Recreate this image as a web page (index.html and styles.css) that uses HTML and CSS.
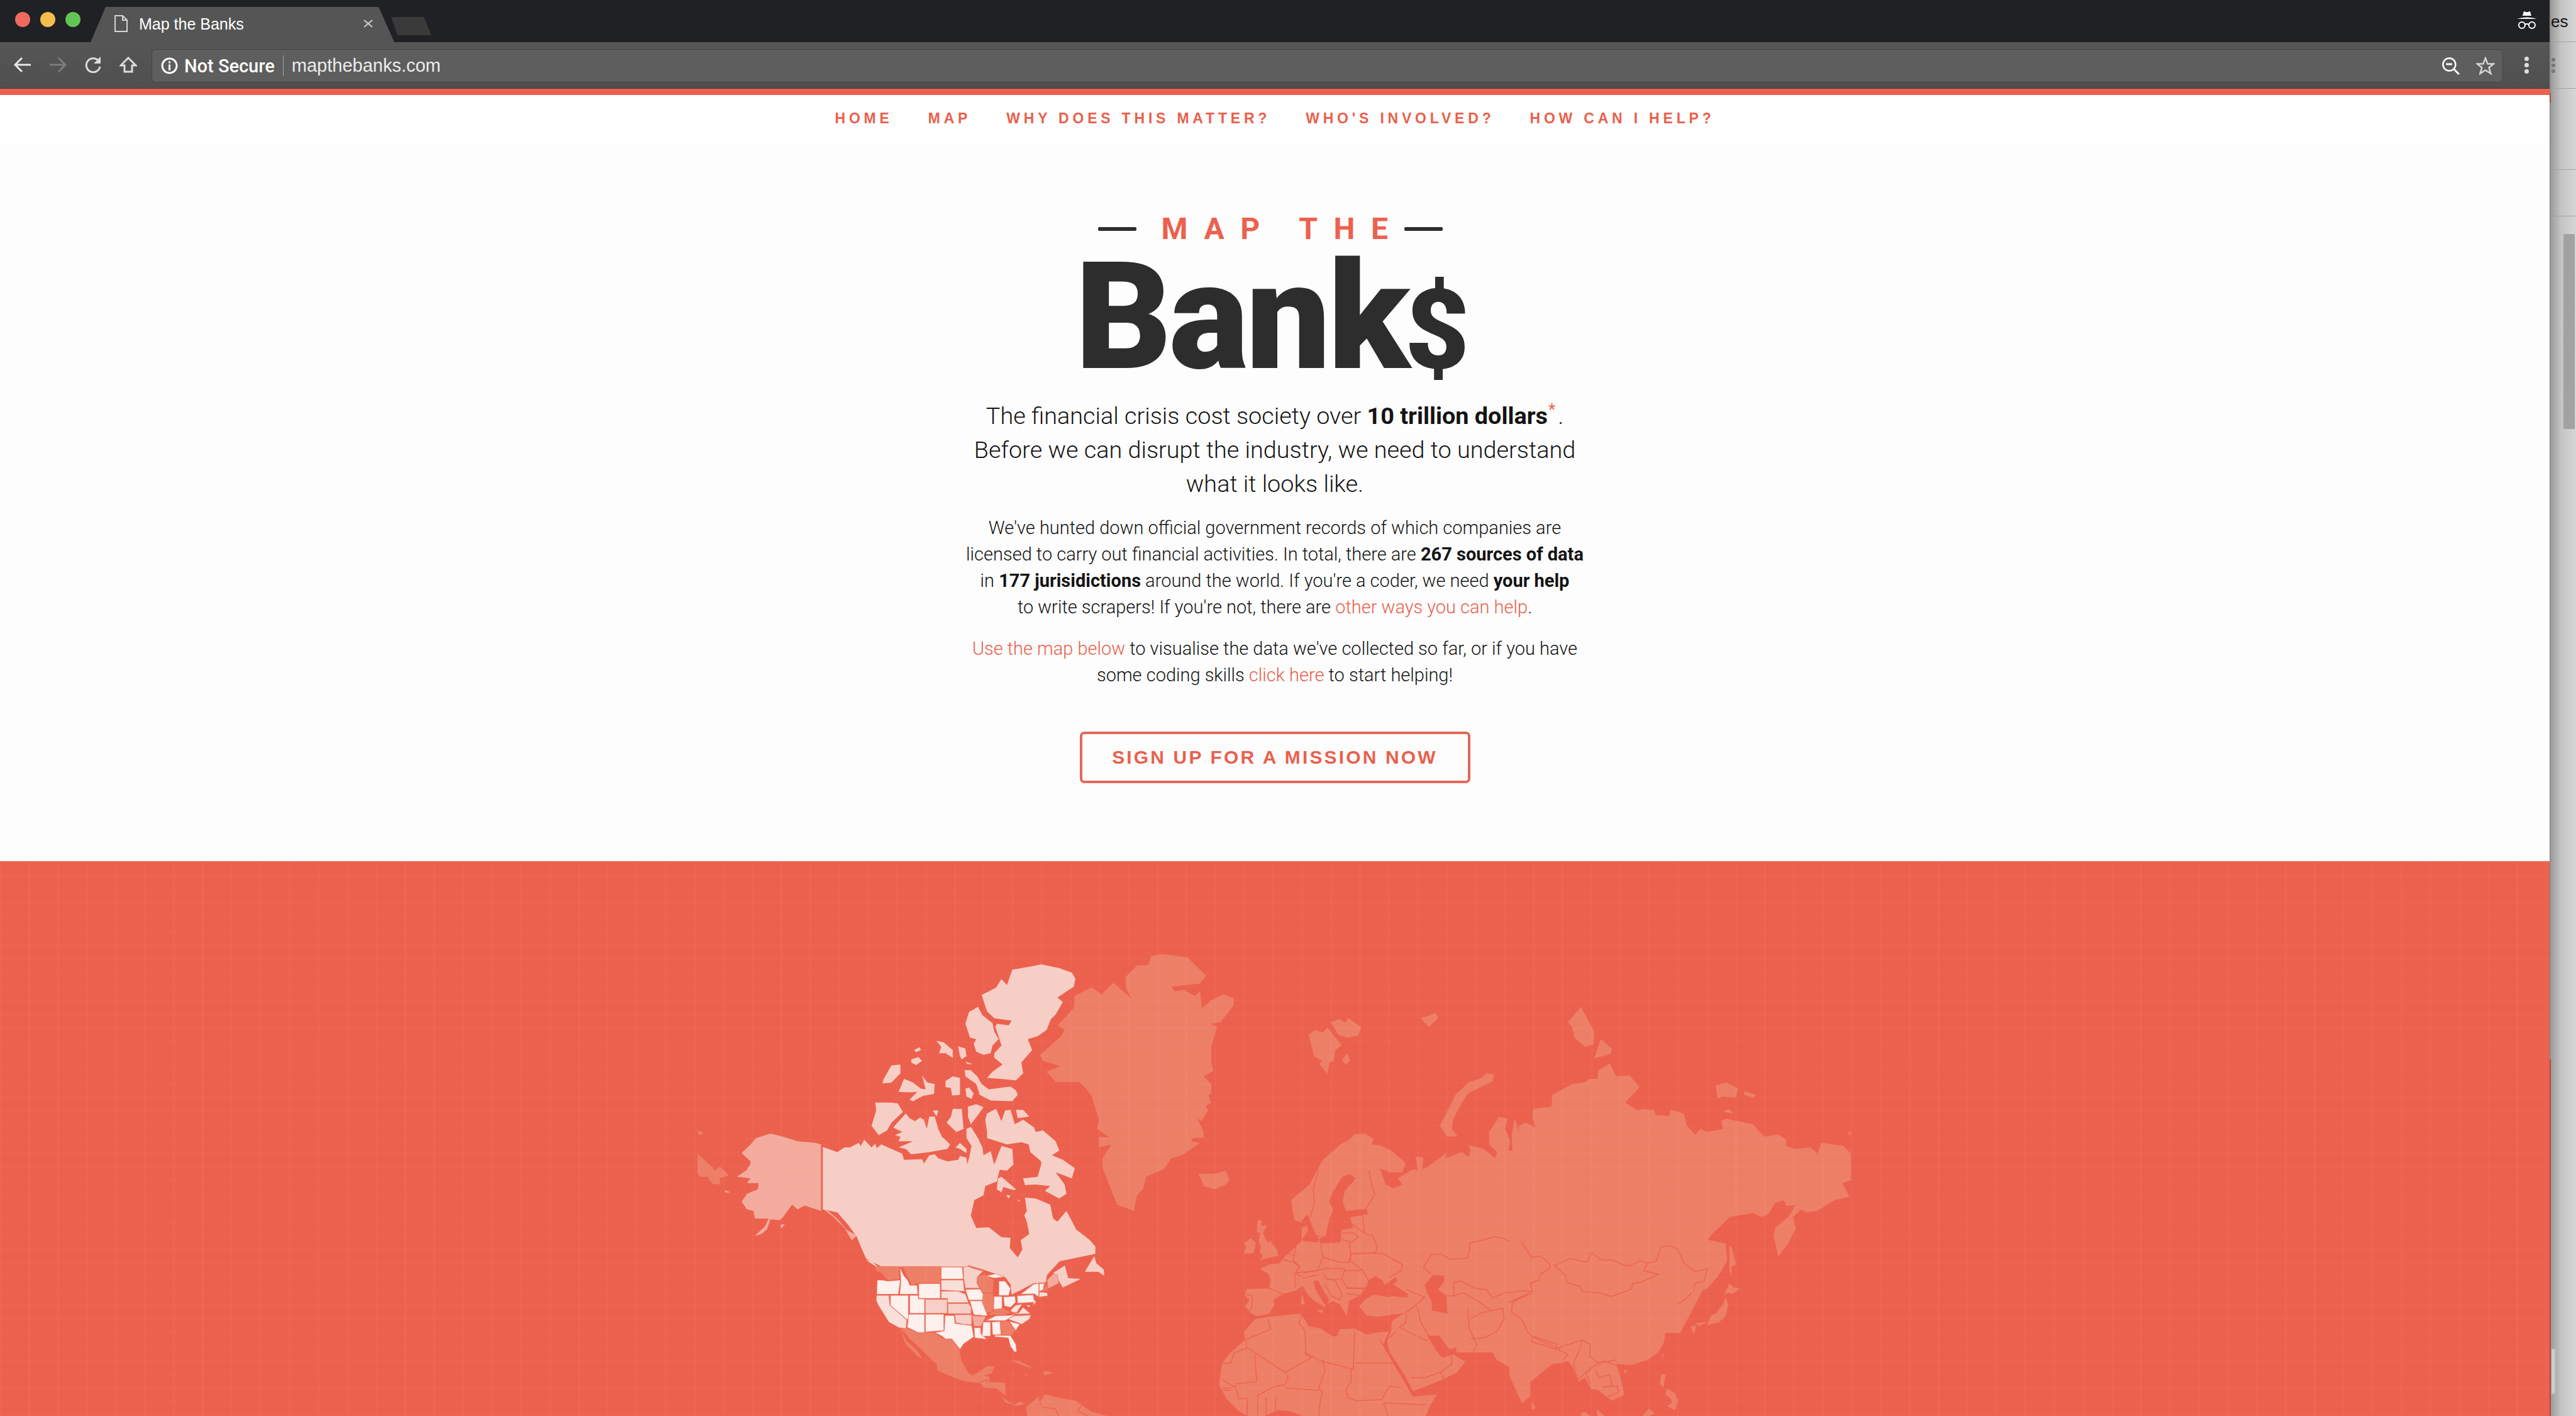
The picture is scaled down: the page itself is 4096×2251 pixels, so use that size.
FILE: index.html
```html
<!DOCTYPE html>
<html>
<head>
    <meta charset="UTF-8">
    <title>Map the Banks</title>
    <link rel="stylesheet" href="styles.css">
</head>
<body>
<div class="window">
    <div class="titlebar">
        <div class="lights"><span class="light red"></span><span class="light yellow"></span><span class="light green"></span></div>
        <div class="tab">
            <svg class="tab-doc" width="21" height="27" viewBox="0 0 21 27"><path d="M1 1H13L20 8V26H1ZM13 1V8H20" fill="none" stroke="#d4d4d4" stroke-width="2"/></svg>
            <span class="tab-title">Map the Banks</span>
            <svg class="tab-close" width="15" height="13" viewBox="0 0 15 13"><path d="M1 1L14 12M14 1L1 12" stroke="#cfcfcf" stroke-width="2"/></svg>
        </div>
        <div class="newtab"></div>
        <svg class="incognito" width="32" height="29" viewBox="0 0 32 29"><path d="M9 8L11 1L16 2.5L21 1L23 8ZM0 13Q16 8 32 13Z" fill="#fff"/><circle cx="8" cy="23" r="5" fill="none" stroke="#fff" stroke-width="2"/><circle cx="24" cy="23" r="5" fill="none" stroke="#fff" stroke-width="2"/><path d="M13 22Q16 20 19 22" fill="none" stroke="#fff" stroke-width="2"/></svg>
    </div>
    <div class="toolbar">
        <svg class="tool" width="28" height="26" viewBox="0 0 28 26"><path d="M27 13H3M13 2L2 13L13 24" fill="none" stroke="#e8e8e8" stroke-width="3"/></svg>
        <svg class="tool" width="28" height="26" viewBox="0 0 28 26"><path d="M1 13H25M15 2L26 13L15 24" fill="none" stroke="#7d7d7d" stroke-width="3"/></svg>
        <svg class="tool" width="28" height="26" viewBox="0 0 28 26"><path d="M23 7A11 11 0 1 0 25 16" fill="none" stroke="#dcdcdc" stroke-width="3"/><path d="M26 0V11H15Z" fill="#dcdcdc"/></svg>
        <svg class="tool" width="28" height="26" viewBox="0 0 28 26"><path d="M14 2L26 14H20V24H8V14H2Z" fill="none" stroke="#dcdcdc" stroke-width="3"/></svg>
        <div class="omnibox">
            <svg class="info" width="27" height="27" viewBox="0 0 27 27"><circle cx="13.5" cy="13.5" r="11.5" fill="none" stroke="#fff" stroke-width="3"/><path d="M13.5 6.500V9.500M13.5 11.500V21" stroke="#fff" stroke-width="3"/></svg>
            <span class="not-secure">Not Secure</span>
            <span class="omni-sep"></span>
            <span class="url">mapthebanks.com</span>
            <svg class="omni-zoom" width="28" height="28" viewBox="0 0 28 28"><circle cx="11.500" cy="11.500" r="10" fill="none" stroke="#fff" stroke-width="2.500"/><path d="M6.500 11H16M18 18L27 27" stroke="#fff" stroke-width="3"/></svg>
            <svg class="omni-star" width="30" height="29" viewBox="0 0 30 29"><path d="M15 2.500L18.500 11.500H28L20.500 17.500L23.500 27L15 21.500L6.500 27L9.500 17.500L2 11.500H11.500Z" fill="none" stroke="#d4d4d4" stroke-width="2.500"/></svg>
        </div>
        <div class="menu-dots"><span></span><span></span><span></span></div>
    </div>
    <div class="accent"></div>
    <div class="page">
        <nav class="nav">
            <a>HOME</a><a>MAP</a><a>WHY DOES THIS MATTER?</a><a>WHO'S INVOLVED?</a><a>HOW CAN I HELP?</a>
        </nav>
        <section class="hero">
            <div class="logo-top"><span class="dash"></span><span class="logo-map">MAP THE</span><span class="dash"></span></div>
            <div class="logo-banks">Bank<span class="dollar">$</span></div>
            <p class="lead">The financial crisis cost society over <strong>10 trillion dollars</strong><sup class="star">*</sup>.<br>Before we can disrupt the industry, we need to understand<br>what it looks like.</p>
            <p class="body-text">We've hunted down official government records of which companies are<br>licensed to carry out financial activities. In total, there are <strong>267 sources of data</strong><br>in <strong>177 jurisidictions</strong> around the world. If you're a coder, we need <strong>your help</strong><br>to write scrapers! If you're not, there are <a>other ways you can help</a>.</p>
            <p class="body-text second"><a>Use the map below</a> to visualise the data we've collected so far, or if you have<br>some coding skills <a>click here</a> to start helping!</p>
            <a class="signup">SIGN UP FOR A MISSION NOW</a>
        </section>
        <section class="map">
            <svg class="world" width="4054" height="882" viewBox="0 1369 4054 882">
                <!-- north america, traced at 1.742 x 2.034 -->
                <g transform="translate(1050 1480) scale(.574 .4916)">
                    <g class="c">
                        <polygon points="890,207 930,183 945,155 960,175 975,125 1025,115 1055,108 1105,120 1140,135 1150,155 1145,180 1100,215 1115,230 1095,270 1082,285 1070,320 1045,340 1018,350 1030,385 1000,425 1005,460 985,483 940,478 905,475 920,455 948,432 925,410 925,395 945,370 938,345 928,310 932,300 965,305 973,290 925,282 905,260"/>
                        <polygon points="845,300 855,262 880,245 892,272 920,298 925,325 937,350 920,370 915,395 895,400 875,390 868,365 875,350 858,345"/>
                        <polygon points="765,355 785,360 810,385 810,410 790,395 772,395 778,375"/>
                        <polygon points="825,373 845,380 848,405 835,415 830,405"/>
                        <polygon points="845,422 865,430 850,430"/>
                        <polygon points="703,385 718,376 722,385 708,392"/>
                        <polygon points="695,415 715,408 725,420 708,434 695,425"/>
                        <polygon points="640,435 665,432 665,460 640,490 615,493 618,480"/>
                        <polygon points="660,520 675,478 700,490 722,510 735,512 725,468 740,490 760,495 758,527 728,533 700,550 690,545 712,520 690,522"/>
                        <polygon points="790,485 810,470 830,475 830,530 808,532 805,508 790,505"/>
                        <polygon points="845,510 855,506 868,525 862,543 848,535"/>
                        <polygon points="843,450 860,450 878,470 890,495 910,512 970,503 985,515 990,530 975,550 915,548 885,530 875,495 845,470"/>
                        <polygon points="595,555 640,555 658,558 672,585 640,620 628,645 605,660 585,630 598,580"/>
                        <polygon points="645,635 680,590 690,605 705,615 720,603 730,610 738,640 745,600 760,600 770,640 780,665 803,690 795,705 745,715 695,722 680,705 660,700 700,680 660,680 665,665 650,660 670,650"/>
                        <polygon points="755,580 770,580 765,600"/>
                        <polygon points="810,575 835,575 840,640 820,650 793,620 805,600"/>
                        <polygon points="852,568 875,560 895,570 880,595 860,625 852,600"/>
                        <polygon points="818,700 830,685 848,705 848,718 830,705"/>
                        <polygon points="985,578 1005,578 1022,600 990,605"/>
                        <polygon points="900,610 905,590 930,575 945,615 955,580 970,578 982,625 1005,610 1035,635 1040,650 1060,645 1095,680 1105,710 1085,725 1115,740 1148,767 1140,800 1095,780 1120,820 1125,850 1105,865 1065,840 1080,825 1040,820 1010,822 1005,800 1045,795 1055,755 1055,745 1025,715 1020,690 1000,683 960,690 905,670 905,650"/>
                        <polygon points="935,800 945,795 985,835 980,838 950,828 945,845 932,835"/>
                        <polygon points="958,855 970,855 965,865"/>
                        <polygon points="990,868 996,872 992,875"/>
                        <polygon points="450,698 490,715 510,700 525,700 550,685 555,695 565,675 585,700 595,688 600,702 612,690 670,720 675,740 725,738 730,752 745,725 760,722 770,735 795,745 825,740 830,727 848,733 850,755 855,735 862,695 848,670 848,640 860,633 880,670 892,700 895,725 915,712 925,755 945,695 975,705 978,755 960,775 940,772 932,810 900,825 895,855 870,870 860,920 875,960 910,958 945,990 970,992 968,1025 990,1055 1003,1030 998,1000 1022,980 1015,940 1008,920 1015,905 1010,862 1040,865 1080,885 1088,930 1100,940 1125,905 1152,965 1190,1000 1205,1020 1205,1044 1106,1068 1071,1112 1068,1136 1034,1139 1002,1159 973,1176 970,1142 955,1119 894,1095 853,1081 850,1085 613,1085 570,1060 555,1020 545,990 520,950 490,910 450,900"/>
                    </g>
                    <polygon class="bay" points="1015,740 1030,735 1028,755 1018,758"/>
                    <polygon class="a" points="445,690 445,905 400,888 380,900 365,885 340,925 330,935 305,932 295,965 280,980 262,985 290,955 300,930 262,930 258,905 240,900 225,875 240,850 270,835 272,815 240,815 250,800 212,795 240,772 245,760 270,760 268,785 245,782 250,745 225,718 250,690 265,670 305,655 340,665 380,680 430,685"/>
                    <polygon class="a" points="452,900 465,905 490,930 515,965 545,985 530,1000 510,960 480,925"/>
                    <polygon class="a" points="178,838 195,845 180,845"/>
                    <polygon class="a" points="332,950 345,948 335,962"/>
                    <g class="l">
                        <polygon points="103,720 145,765 150,775 165,762 190,790 165,800 165,820 145,818 130,795 110,795 103,785"/>
                        <polygon points="103,645 120,652 108,662"/>
                        <polygon points="1052,400 1110,340 1120,320 1100,305 1145,250 1148,210 1195,182 1222,205 1255,168 1305,218 1290,185 1288,150 1320,112 1352,110 1360,80 1390,75 1460,85 1512,145 1495,170 1415,180 1425,195 1450,190 1480,210 1495,195 1500,250 1525,225 1560,205 1588,218 1588,240 1552,295 1524,300 1542,310 1526,375 1526,425 1532,452 1505,470 1526,495 1526,525 1518,530 1526,555 1511,565 1517,580 1499,615 1487,605 1505,650 1505,668 1472,670 1475,650 1472,680 1495,685 1445,725 1415,735 1395,770 1345,795 1337,835 1320,855 1312,905 1290,895 1265,885 1240,810 1225,765 1225,735 1250,690 1215,700 1215,665 1245,668 1210,640 1215,610 1195,535 1180,510 1160,488 1095,488 1070,455 1108,437 1060,420"/>
                    </g>
                </g>
                <!-- us, central america -->
                <g transform="translate(1350 1980) scale(.3333)">
                    <g class="c">
                        <polygon points="975,130 1030,95 1045,155 1105,160 1020,200 1005,175"/>
                        <polygon points="1125,125 1170,50 1180,85 1215,115 1218,145 1190,125"/>
                        <polygon points="80,68 110,75 155,120 120,95"/>
                    </g>
                    <g class="states">
                        <polygon class="s-l" points="125,100 238,100 238,160 185,165 155,130 130,120"/>
                        <polygon class="s-w" points="135,165 160,165 185,170 245,165 235,232 132,232"/>
                        <polygon class="s-p" points="132,238 190,238 195,285 275,355 272,395 240,392 190,365 165,325 140,285 130,262"/>
                        <polygon class="s-w" points="198,238 283,238 283,350 275,352 198,285"/>
                        <polygon class="s-w" points="243,105 262,145 280,165 290,190 325,190 328,232 242,232 248,170"/>
                        <polygon class="s-l" points="255,100 436,100 436,178 330,178 300,190 280,150"/>
                        <polygon class="s-w" points="333,182 435,182 435,252 333,252"/>
                        <polygon class="s-w" points="290,238 330,238 330,255 360,255 360,323 290,323"/>
                        <polygon class="s-w" points="285,328 360,328 360,415 330,415 278,390"/>
                        <polygon class="s-w" points="365,328 452,328 452,405 365,412"/>
                        <polygon class="s-m" points="364,257 468,257 468,323 364,323"/>
                        <polygon class="s-w" points="440,103 540,103 545,160 440,160"/>
                        <polygon class="s-p" points="440,165 545,165 550,218 440,212"/>
                        <polygon class="s-p" points="440,218 520,218 555,232 570,272 470,272 470,252 440,252"/>
                        <polygon class="s-m" points="472,277 570,277 582,295 582,325 472,325"/>
                        <polygon class="s-m" points="505,330 585,330 585,378 550,376 510,368"/>
                        <polygon class="s-w" points="458,334 502,334 505,372 585,382 595,435 545,470 530,495 490,445 460,445 440,430 410,415 455,407"/>
                        <polygon class="s-m" points="545,103 570,100 590,108 640,122 612,150 610,180 622,203 555,203 548,160"/>
                        <polygon class="s-w" points="555,210 625,208 648,245 635,260 572,260"/>
                        <polygon class="s-w" points="577,264 635,264 650,300 660,335 595,330 585,295"/>
                        <polygon class="s-a" points="587,335 652,338 630,385 597,385"/>
                        <polygon class="s-w" points="597,392 628,392 628,420 658,447 600,440"/>
                        <polygon class="s-l" points="612,150 650,138 670,155 690,165 685,225 635,222 612,180"/>
                        <polygon class="s-l" points="640,228 685,228 690,290 680,315 655,320 635,270"/>
                        <polygon class="s-w" points="715,170 745,170 770,205 762,238 715,238"/>
                        <polygon class="s-w" points="655,145 700,135 738,150 690,155"/>
                        <polygon class="s-w" points="692,243 730,243 730,300 690,305"/>
                        <polygon class="s-w" points="737,245 792,242 795,270 770,295 742,288"/>
                        <polygon class="s-l" points="665,330 700,305 735,300 770,318 740,330"/>
                        <polygon class="s-w" points="655,358 700,335 790,332 745,358"/>
                        <polygon class="s-p" points="770,310 795,285 825,280 800,320 780,318"/>
                        <polygon class="s-p" points="775,328 810,322 830,295 865,325"/>
                        <polygon class="s-p" points="760,350 790,335 868,332 860,350 825,375 770,355"/>
                        <polygon class="s-w" points="765,362 815,375 795,405"/>
                        <polygon class="s-l" points="722,362 760,362 790,405 775,430 730,425"/>
                        <polygon class="s-w" points="682,365 720,362 725,425 685,425"/>
                        <polygon class="s-w" points="640,365 675,365 675,432 635,432"/>
                        <polygon class="s-w" points="695,428 770,430 795,470 800,505 790,508 770,480 760,440 695,435"/>
                        <polygon class="s-w" points="802,240 878,235 885,270 805,275"/>
                        <polygon class="s-w" points="820,232 880,185 905,180 905,245 885,230"/>
                        <polygon class="s-a" points="945,165 975,135 995,140 1000,180 950,205"/>
                        <polygon class="s-w" points="908,183 932,180 925,212 908,218"/>
                        <polygon class="s-l" points="925,215 945,180 947,215"/>
                        <polygon class="s-p" points="908,222 945,225 948,240 908,245"/>
                        <polygon class="s-w" points="885,258 892,270 878,285"/>
                        <polygon class="s-w" points="845,285 865,285 860,295"/>
                    </g>
                    <g class="l">
                        <polygon points="243,398 278,395 330,418 405,415 445,445 490,448 525,495 535,545 570,610 590,620 660,575 695,575 680,610 640,620 625,655 560,650 500,630 420,595 420,570 350,500 290,445 265,415"/>
                        <polygon points="245,400 275,455 325,500 350,540 330,530 270,470"/>
                        <polygon points="625,655 640,620 670,625 668,650 745,655 748,715 700,680 660,680 640,675"/>
                        <polygon points="725,720 760,745 790,760 815,745 840,755 800,765 750,750"/>
                        <polygon points="770,548 810,550 880,585 840,575"/>
                        <polygon points="930,597 975,605 930,620"/>
                        <polygon points="840,615 855,618 845,622"/>
                        <polygon points="845,770 905,720 915,740 935,710 1000,725 1080,740 1110,760 1150,790 1230,813 850,813"/>
                    </g>
                    <polygon class="gulf" points="660,575 570,610 535,545 532,510 590,445 660,450 740,440 760,500"/>
                    <g class="b">
                        <polyline points="625,655 650,640 665,655"/>
                        <polyline points="905,730 920,770 985,780 1000,813"/>
                        <polyline points="1110,760 1090,790 1140,813"/>
                    </g>
                </g>
                <!-- north eurasia and arctic islands -->
                <g transform="translate(1900 1480) scale(.7015 .4916)">
                    <g class="l">
                        <polygon points="218,870 260,820 290,740 330,690 350,675 362,657 385,655 405,672 400,690 418,692 445,710 478,750 470,780 442,780 420,768 432,820 450,832 470,820 460,800 495,770 505,775 500,730 518,733 515,770 525,765 570,718 568,735 605,715 620,730 625,710 620,692 655,705 680,735 685,715 667,690 667,650 690,600 708,607 703,640 715,680 710,710 725,712 725,750 710,778 700,780 720,720 718,660 725,605 735,655 733,630 750,620 772,635 765,600 767,575 808,568 810,530 855,495 882,490 895,478 912,478 915,450 940,428 955,470 985,467 1008,505 975,555 1003,580 1015,575 1040,578 1045,595 1075,598 1078,578 1108,590 1115,630 1135,660 1145,640 1160,650 1180,645 1197,640 1193,615 1205,607 1265,625 1290,665 1322,658 1340,675 1340,695 1360,705 1395,700 1412,720 1420,685 1470,695 1487,720 1487,805 1468,815 1483,860 1450,870 1410,905 1385,910 1375,900 1355,925 1362,965 1345,995 1325,1050 1312,990 1315,960 1345,925 1375,855 1365,885 1340,890 1335,870 1315,880 1300,915 1285,925 1265,912 1212,925 1160,998 1200,1010 1205,1014 1100,1300 500,1300 380,1050 300,985 275,985 255,915 240,942 225,935"/>
                        <polygon points="8,785 45,785 70,775 78,805 70,820 45,835 20,825 15,805"/>
                        <polygon points="258,335 272,320 290,328 300,312 333,370 318,385 315,420 305,425 300,462 282,430 288,420 270,405"/>
                        <polygon points="308,295 328,285 340,297 348,282 377,310 370,338 345,345 325,335"/>
                        <polygon points="345,395 352,420 342,432 333,418"/>
                        <polygon points="512,280 528,275 545,265 552,280 530,310 520,295"/>
                        <polygon points="555,630 575,575 590,530 620,490 650,475 660,460 678,465 675,485 620,525 605,555 585,610 582,640 595,663 572,665"/>
                        <polygon points="845,295 875,245 905,325 903,368 885,375 860,345 855,310"/>
                        <polygon points="905,412 920,350 945,380 943,397"/>
                        <polygon points="1180,500 1205,490 1232,510 1225,538 1195,535 1185,542"/>
                        <polygon points="1245,518 1272,530 1265,540 1245,530"/>
                        <polygon points="1198,585 1210,575 1220,590"/>
                        <polygon points="1480,655 1487,648 1485,662"/>
                    </g>
                </g>
                <!-- europe, africa, middle east -->
                <g transform="translate(1900 1860) scale(.3333)">
                    <g class="l">
                        <polygon points="510,335 480,365 445,400 415,425 405,445 355,450 310,472 350,495 360,520 355,565 245,568 240,600 260,620 240,650 265,680 295,697 355,685 380,640 372,622 420,590 480,575 515,552 535,590 570,625 620,655 630,640 655,625 690,640 725,695 735,625 785,600 810,570 860,505 810,400 600,330"/>
                        <polygon points="510,275 535,265 540,290 520,330 510,330"/>
                        <polygon points="500,345 760,270 820,200 1500,0 1500,600 1100,620 1010,600 960,540 860,505 810,570"/>
                        <polygon points="785,650 810,620 850,595 920,605 1045,610 1060,640 1000,685 935,690 880,700 820,695"/>
                        <polygon points="290,710 355,700 500,685 530,720 540,745 600,755 660,795 680,790 690,760 760,755 820,785 870,775 925,770 900,830 875,800 945,920 1040,1080 1155,1070 1130,1110 1100,1173 250,1173 210,1150 150,1090 115,1025 125,950 130,920 170,870 240,810 235,770 270,730"/>
                        <polygon points="915,810 935,775 940,720 1000,680 1060,650 1115,800 1150,860 1180,895 1235,880 1290,915 1250,965 1180,1000 1040,1055 1005,985 930,870"/>
                        <polygon points="1060,640 1130,660 1200,680 1300,660 1420,670 1500,700 1500,940 1440,905 1420,870 1250,870 1240,848 1215,855 1165,790 1115,790 1075,700"/>
                        <polygon points="300,240 320,240 315,265 345,265 325,300 345,345 360,340 395,385 395,410 340,420 310,432 325,410 310,395 315,365 305,345 310,300 295,295"/>
                        <polygon points="235,350 265,325 290,345 280,395 235,400 245,365"/>
                        <polygon points="515,600 525,640 505,640 510,600"/>
                        <polygon points="580,670 610,665 610,685"/>
                    </g>
                    <g class="bay">
                        <polygon points="705,30 740,20 768,40 715,100 705,150 720,195 820,185 825,210 740,225 755,275 700,285 695,345 600,350 590,330 625,310 640,235 660,190 640,150 660,100"/>
                        <polygon points="510,330 520,340 590,345 590,330 575,310 545,300 540,290"/>
                        <polygon points="565,530 585,525 640,620 625,650 575,570"/>
                        <polygon points="810,615 830,525 860,505 895,525 905,548 960,510 965,530 945,545 1015,590 1015,608 920,600 850,590"/>
                        <polygon points="1095,550 1135,500 1190,505 1190,530 1160,570 1200,600 1205,685 1130,670 1130,630 1110,590"/>
                        <polygon points="1115,800 1130,795 1175,860 1215,860 1250,845 1240,870 1215,885 1165,880 1140,830"/>
                        <polygon points="330,1173 400,1145 450,1150 515,1173"/>
                    </g>
                    <g class="b">
                        <polyline points="590,0 565,90 570,160 550,225"/>
                        <polyline points="830,0 845,80 860,115 815,185"/>
                        <polyline points="755,215 800,215 810,300 750,260"/>
                        <polyline points="705,300 755,300 780,320 745,345 700,330"/>
                        <polyline points="810,305 850,315 870,370 860,395 745,400 735,345"/>
                        <polyline points="600,350 610,415 690,440 735,440 745,400"/>
                        <polyline points="480,365 470,430 500,460 480,490 585,480 610,415"/>
                        <polyline points="415,425 470,440 500,460 475,495 480,560"/>
                        <polyline points="445,400 480,410"/>
                        <polyline points="355,565 420,590"/>
                        <polyline points="248,595 275,600 270,660 250,680"/>
                        <polyline points="480,490 520,515 590,500"/>
                        <polyline points="520,490 585,480 640,465"/>
                        <polyline points="640,470 715,470 700,520 630,520 610,490"/>
                        <polyline points="715,480 800,478 830,530 810,565 725,560 700,520"/>
                        <polyline points="725,565 805,565 800,600 725,590"/>
                        <polyline points="620,515 670,530 700,590 690,620 650,600 620,545"/>
                        <polyline points="745,400 860,395 900,400 990,450 985,480 920,515"/>
                        <polyline points="800,478 740,430 745,400"/>
                        <polyline points="1060,640 1000,685 935,692"/>
                        <polyline points="1010,570 1095,605 1060,640"/>
                        <polyline points="1060,650 1075,720 1115,790"/>
                        <polyline points="1010,690 1005,730 975,750 1075,800 1110,815"/>
                        <polyline points="960,770 915,810"/>
                        <polyline points="1030,990 1100,990 1170,965 1190,995"/>
                        <polyline points="1170,965 1225,925 1225,885"/>
                        <polyline points="1300,660 1310,760 1345,835 1330,865"/>
                        <polyline points="1310,710 1370,680 1420,670 1470,660 1475,710 1440,770 1380,800 1315,805"/>
                        <polyline points="1200,600 1235,600 1280,585 1340,620 1415,670"/>
                        <polyline points="1235,600 1235,535 1270,530 1340,565 1390,570 1420,610 1470,590 1500,580"/>
                        <polyline points="1090,465 1125,405 1170,400 1220,425 1300,420 1310,380 1310,350 1430,318 1470,325 1500,340"/>
                        <polyline points="1090,465 1125,495"/>
                        <polyline points="240,810 360,760 350,710"/>
                        <polyline points="130,925 170,920 190,870 245,850 245,810"/>
                        <polyline points="245,845 430,965 555,895 530,880 525,765 495,730 515,685"/>
                        <polyline points="285,880 295,1010 195,1020"/>
                        <polyline points="525,870 600,910 755,950 762,770"/>
                        <polyline points="762,920 945,920"/>
                        <polyline points="745,950 745,1010 720,1050 730,1085 770,1100 890,1095 930,1030 985,1040"/>
                        <polyline points="610,905 620,960 590,1040 610,1060 600,1090 590,1173"/>
                        <polyline points="430,965 445,990 430,1025 385,1030 300,1075 300,1173"/>
                        <polyline points="190,1025 210,1090 250,1090 250,1173"/>
                        <polyline points="430,1035 440,1040 590,1050"/>
                        <polyline points="900,1110 1100,1120"/>
                        <polyline points="900,1110 920,1173"/>
                        <polyline points="130,1000 190,1035"/>
                        <polyline points="130,1040 175,1040"/>
                        <polyline points="130,1050 170,1050"/>
                        <polyline points="340,1085 340,1173"/>
                        <polyline points="385,1085 385,1173"/>
                    </g>
                </g>
                <!-- east asia -->
                <g transform="translate(2400 1960) scale(.3333)">
                    <g class="l">
                        <polygon points="0,0 970,0 945,35 1030,50 1040,130 1000,200 945,265 885,280 835,320 820,345 850,365 850,410 815,425 805,365 790,345 750,330 740,315 675,350 715,385 700,420 745,470 738,520 710,570 660,605 580,630 510,625 540,730 548,770 490,800 455,775 425,750 390,745 360,690 330,710 300,635 280,610 250,620 205,625 150,670 100,710 100,780 60,812 0,680"/>
                        <polygon points="945,440 960,395 985,385 1020,340 1030,305 1045,340 1030,400 1000,425"/>
                        <polygon points="1022,300 1050,240 1070,260 1100,265 1065,290 1040,285"/>
                        <polygon points="1050,60 1060,70 1082,150 1060,160 1060,205 1050,180"/>
                        <polygon points="865,445 890,440 885,475 875,475"/>
                        <polygon points="890,430 945,425 905,445"/>
                        <polygon points="730,580 738,578 725,605"/>
                        <polygon points="545,655 565,655 550,670"/>
                        <polygon points="725,672 745,678 735,735 718,720"/>
                        <polygon points="750,740 790,765 805,800 790,845 750,825 775,810 770,790 745,770"/>
                        <polygon points="105,805 125,835 108,843"/>
                        <polygon points="1260,0 1355,0 1330,50 1282,110 1265,30"/>
                        <polygon points="340,858 365,855 385,873 345,873"/>
                        <polygon points="635,873 665,838 695,860 665,873"/>
                        <polygon points="415,840 455,873 420,873"/>
                    </g>
                    <g class="b">
                        <polygon points="215,155 270,205 275,235 335,255 350,280 430,285 485,303 580,270 590,240 630,235 710,197 640,180 660,145 625,132 575,155 550,155 490,128 445,130 390,95 370,140 290,122"/>
                        <polyline points="55,40 105,115 150,110 195,150 190,170 150,195 140,225 100,240 110,280 60,275 0,285"/>
                        <polyline points="660,145 700,135 725,65 770,62 800,75 835,145 885,185 945,170 930,230 885,240 880,280"/>
                        <polyline points="800,340 835,320 870,285"/>
                        <polyline points="0,330 105,285 15,330 10,375 60,415 85,470 110,495 230,550 345,510 385,530 385,590 425,620 510,605"/>
                        <polygon points="105,515 120,495 225,530 225,555 110,520"/>
                        <polyline points="230,555 280,580 250,610"/>
                        <polyline points="350,510 320,590 305,625 325,700 395,640 425,625"/>
                        <polyline points="395,640 365,670 385,720"/>
                        <polyline points="410,660 430,690 480,675 490,730 445,735"/>
                        <polyline points="430,620 450,610 520,635"/>
                        <polyline points="445,735 515,730 520,760 470,780"/>
                    </g>
                </g>
            </svg>
        </section>
    </div>
    <span class="edge-top"></span>
    <span class="edge-bottom"></span>
</div>
<div class="backwin">
    <div class="back-row back-title"><span>es</span></div>
    <div class="back-row back-tools"><i></i><i></i><i></i></div>
    <div class="back-row back-a"></div>
    <div class="back-row back-b"></div>
    <div class="back-thumb"></div>
    <div class="back-tab"></div>
</div>
</body>
</html>
```

FILE: styles.css
```css
* {
    box-sizing: border-box;
}

html, body {
    margin: 0;
    padding: 0;
}

body {
    width: 4096px;
    height: 2251px;
    overflow: hidden;
    display: flex;
    font-family: "Liberation Sans", Arial, sans-serif;
    background-color: #c8c8c8;
}

.window {
    position: relative;
    width: 4056px;
    height: 2251px;
    flex: none;
    display: flex;
    flex-direction: column;
    border-right: 2px solid #8c8c8c;
}

/* browser tab strip */
.titlebar {
    height: 67px;
    flex: none;
    display: flex;
    align-items: flex-end;
    background-color: #202124;
}

.lights {
    width: 144px;
    height: 62px;
    align-self: flex-start;
    display: flex;
    gap: 16px;
    padding: 19px 0 0 24px;
    flex: none;
}

.light {
    width: 24px;
    height: 24px;
    border-radius: 50%;
}

.red { background-color: #ee6a5f; }
.yellow { background-color: #f5bd4f; }
.green { background-color: #61c454; }

.tab {
    width: 483px;
    height: 56px;
    flex: none;
    display: flex;
    align-items: center;
    padding: 0 34px 0 38px;
    background-color: #555;
    clip-path: polygon(24px 0, 458px 0, 483px 100%, 0 100%);
    color: #fff;
    font-size: 25px;
}

.tab-doc {
    flex: none;
    margin-top: -4px;
}

.tab-title {
    margin-left: 18px;
    flex: 1;
    margin-top: -2px;
}

.tab-close {
    margin-top: -4px;
}

.newtab {
    width: 64px;
    height: 29px;
    flex: none;
    align-self: flex-start;
    margin: 27px 0 0 -5px;
    background-color: #3a3a3a;
    clip-path: polygon(0 0, 52px 0, 64px 100%, 10px 100%);
}

.incognito {
    margin: 17px 20px 0 auto;
    align-self: flex-start;
    flex: none;
}

/* address bar row */
.toolbar {
    height: 74px;
    flex: none;
    display: flex;
    align-items: center;
    padding-left: 22px;
    background: linear-gradient(#565656, #4f4f4f);
    border-bottom: 1px solid #3a3a3a;
}

.tool {
    flex: none;
    margin-right: 28px;
    margin-top: -2px;
}

.omnibox {
    width: 3739px;
    height: 53px;
    flex: none;
    margin-left: -5px;
    margin-top: 2px;
    display: flex;
    align-items: center;
    padding: 0 12px 0 14px;
    background-color: #5e5e5e;
    border: 1px solid #444;
    border-radius: 6px;
    font-size: 29px;
}

.info {
    flex: none;
}

.not-secure {
    margin-left: 10px;
    color: #fff;
    font-family: "Roboto", "Liberation Sans", sans-serif;
    font-weight: 500;
}

.omni-sep {
    width: 1px;
    height: 33px;
    margin: 0 13px;
    background-color: #a8a8a8;
}

.url {
    color: #ececec;
}

.omni-zoom {
    margin-left: auto;
    flex: none;
}

.omni-star {
    margin-left: 26px;
    flex: none;
}

.menu-dots {
    margin-left: 34px;
    display: flex;
    flex-direction: column;
    gap: 3px;
}

.menu-dots span {
    width: 7px;
    height: 7px;
    border-radius: 50%;
    background-color: #ddd;
}

.accent {
    height: 10px;
    flex: none;
    background-color: #ec614e;
}

.page {
    flex: 1;
    display: flex;
    flex-direction: column;
    min-height: 0;
}

.nav {
    height: 76px;
    flex: none;
    display: flex;
    justify-content: center;
    gap: 56px;
    padding: 26px 0 0 0;
    background-color: #fff;
}

.nav a {
    color: #e9604c;
    font-size: 23px;
    font-weight: bold;
    letter-spacing: 5.800px;
    line-height: 1;
}

.hero {
    height: 1142px;
    flex: none;
    display: flex;
    flex-direction: column;
    align-items: center;
    padding-top: 118px;
    background-color: #fdfdfd;
    color: #141414;
}

.logo-top {
    display: flex;
    align-items: center;
    height: 38px;
    margin-right: 14px;
}

.dash {
    width: 61px;
    height: 6px;
    border-radius: 2px;
    background-color: #2d2d2d;
}

.logo-map {
    margin: 0 0 0 39px;
    color: #ec614e;
    font-family: "Roboto", sans-serif;
    font-size: 48px;
    font-weight: 700;
    letter-spacing: 25.600px;
    line-height: 1;
    white-space: pre;
}

.logo-banks {
    margin-top: 16px;
    height: 210px;
    color: #2d2d2d;
    font-family: "Roboto", sans-serif;
    font-size: 238px;
    font-weight: 900;
    letter-spacing: -4px;
    line-height: 210px;
    margin-right: 8px;
}

.dollar {
    font-size: 177px;
    letter-spacing: 0;
    margin-left: -4px;
}

.lead {
    margin: 25px 0 0;
    font-family: "Roboto", sans-serif;
    font-size: 37.800px;
    font-weight: 300;
    line-height: 54px;
    text-align: center;
}

.lead strong {
    font-weight: 700;
}

.star {
    color: #ec614e;
    font-size: 26px;
    font-weight: 400;
    line-height: 0;
    margin: 0 4px 0 1px;
}

.body-text {
    margin: 22px 0 0;
    font-family: "Roboto", sans-serif;
    font-size: 29px;
    font-weight: 300;
    line-height: 42px;
    text-align: center;
}

.body-text strong {
    font-weight: 700;
}

.body-text a {
    color: #e9604c;
}

.body-text.second {
    margin-top: 24px;
}

.signup {
    width: 621px;
    height: 82px;
    margin-top: 69px;
    display: flex;
    align-items: center;
    justify-content: center;
    border: 4px solid #e4685a;
    border-radius: 7px;
    color: #e9604c;
    font-size: 30px;
    font-weight: bold;
    letter-spacing: 3.150px;
}

/* map panel, grid lines lie over the land */
.map {
    position: relative;
    flex: 1;
    overflow: hidden;
    background-color: #ec614e;
}

.map::after {
    content: "";
    position: absolute;
    inset: 0;
    background-image:
        linear-gradient(90deg, rgba(255, 255, 255, .022) 3px, transparent 3px),
        linear-gradient(rgba(255, 255, 255, .016) 3px, transparent 3px);
    background-size: 46px 22px;
    background-position: -1px 22px;
}

.world {
    display: block;
}

.world polygon, .world polyline {
    vector-effect: non-scaling-stroke;
}

.l { fill: #ee7f67; }
.c { fill: #f6cec6; }
.a { fill: #f3ab9e; }
.bay, .gulf { fill: #ec614e; }

.b {
    fill: none;
    stroke: #ea644f;
    stroke-width: 1.500px;
}

.states polygon {
    stroke: #ee7763;
    stroke-width: .6px;
}

.s-w { fill: #fdf0ed; }
.s-p { fill: #fadfd9; }
.s-m { fill: #f7cfc7; }
.s-a { fill: #f3ab9e; }
.s-l { fill: #ee7f67; }

/* bits of the window right behind the browser */
.edge-top {
    position: absolute;
    right: -2px;
    top: 148px;
    width: 2px;
    height: 15px;
    background-color: #b5493a;
}

.edge-bottom {
    position: absolute;
    right: -2px;
    top: 1684px;
    bottom: 0;
    width: 2px;
    background-color: #b5493a;
}

.backwin {
    position: relative;
    flex: 1;
    background: linear-gradient(90deg, #9c9c9c, #c4c4c4 40%, #d6d6d6);
    overflow: hidden;
}

.back-row {
    border-bottom: 1px solid #a2a2a2;
}

.back-title {
    height: 67px;
    padding: 20px 0 0 0;
    font-size: 26px;
    line-height: 28px;
    color: #111;
}

.back-tools {
    height: 74px;
    display: flex;
    flex-direction: column;
    gap: 3px;
    padding: 25px 0 0 1px;
}

.back-tools i {
    width: 6px;
    height: 6px;
    border-radius: 50%;
    background-color: #777;
}

.back-a {
    height: 129px;
}

.back-b {
    height: 74px;
}

.back-thumb {
    position: absolute;
    left: 20px;
    top: 372px;
    width: 18px;
    height: 310px;
    background-color: #a2a2a2;
}

.back-tab {
    position: absolute;
    left: 1px;
    top: 2144px;
    width: 6px;
    height: 72px;
    background-color: #cdcdcd;
    border: 1px solid #c0c0c0;
    border-radius: 0 3px 3px 0;
}
```
